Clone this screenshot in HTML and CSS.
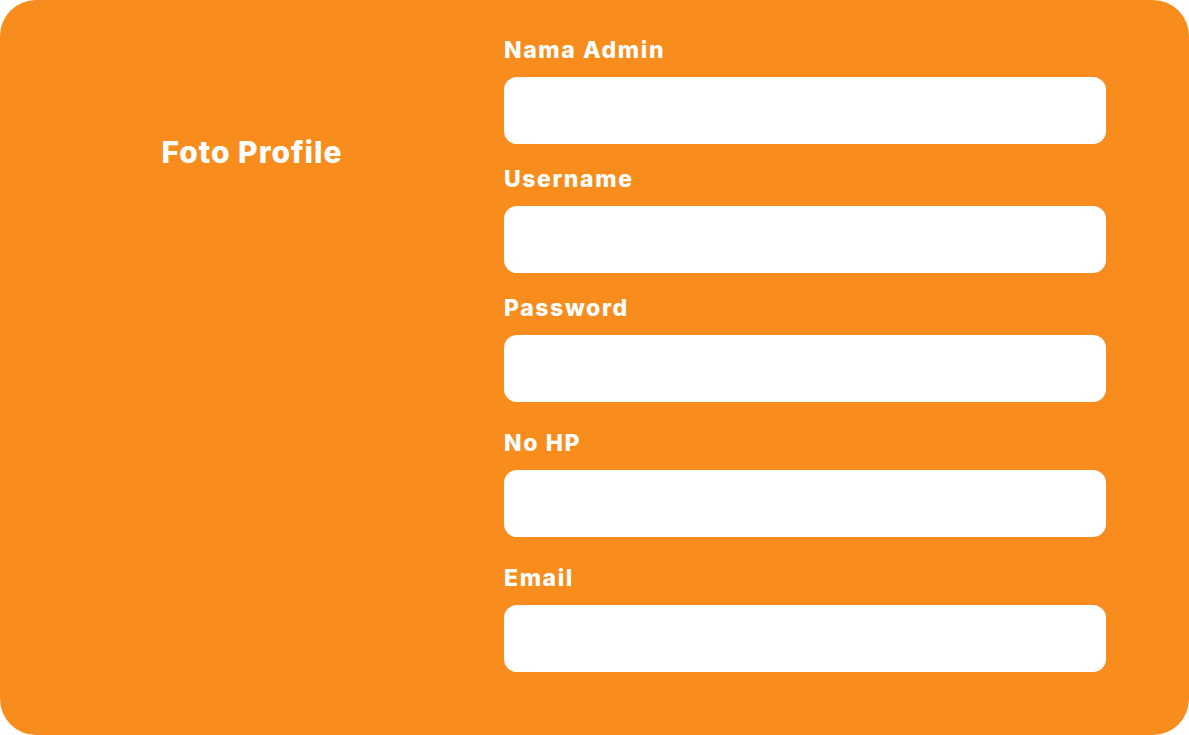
FILE: index.html
```html
<!DOCTYPE html>
<html lang="id">
<head>
<meta charset="utf-8">
<title>Profile Admin</title>
<link rel="stylesheet" href="styles.css">
</head>
<body>
<div class="card">
  <div class="photo-col">
    <h2 class="photo-title">Foto Profile</h2>
  </div>
  <form class="form-col">
    <div class="field">
      <label class="label">Nama Admin</label>
      <div class="input"></div>
    </div>
    <div class="field">
      <label class="label">Username</label>
      <div class="input"></div>
    </div>
    <div class="field">
      <label class="label">Password</label>
      <div class="input"></div>
    </div>
    <div class="field field-wide">
      <label class="label">No HP</label>
      <div class="input"></div>
    </div>
    <div class="field field-wide">
      <label class="label">Email</label>
      <div class="input"></div>
    </div>
  </form>
</div>
</body>
</html>
```
FILE: styles.css
```css
* { box-sizing: border-box; }
html, body { margin: 0; padding: 0; background: #ffffff; }
body {
  font-family: "Inter", "Noto Sans", sans-serif;
  color: #ffffff;
}
.card {
  width: 1189px;
  height: 735px;
  background: #f88d1d;
  border-radius: 36px;
  display: grid;
  grid-template-columns: 504px 602px;
}
.photo-col {
  display: flex;
  justify-content: center;
  padding-top: 132px;
}
.photo-title {
  margin: 0;
  font-size: 30px;
  line-height: 40px;
  font-weight: 800;
  letter-spacing: 1px;
  height: 40px;
}
.form-col {
  display: flex;
  flex-direction: column;
  padding-top: 35px;
  margin: 0;
}
.field {
  display: flex;
  flex-direction: column;
  gap: 12px;
  margin-bottom: 20px;
}
.field-wide { margin-top: 6px; }
.label {
  font-size: 23px;
  line-height: 30px;
  height: 30px;
  font-weight: 800;
  letter-spacing: 1.6px;
}
.input {
  height: 67px;
  background: #ffffff;
  border-radius: 13px;
}
```
